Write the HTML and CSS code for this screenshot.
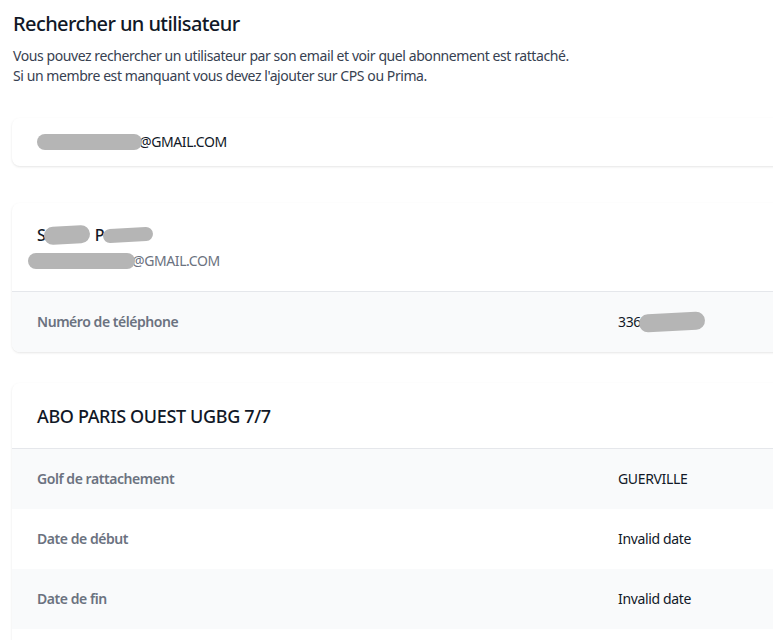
FILE: index.html
```html
<!DOCTYPE html>
<html lang="fr">
<head>
<meta charset="utf-8">
<title>Rechercher un utilisateur</title>
<link rel="stylesheet" href="styles.css">
</head>
<body>
<main class="page">
  <h1 class="title">Rechercher un utilisateur</h1>
  <p class="intro">Vous pouvez rechercher un utilisateur par son email et voir quel abonnement est rattaché.<br>Si un membre est manquant vous devez l'ajouter sur CPS ou Prima.</p>

  <section class="card search-card">
    <div class="search-value"><span class="blur blur-email1"></span>@GMAIL.COM</div>
  </section>

  <section class="card user-card">
    <div class="card-head">
      <div class="user-name">S<span class="blur blur-n1"></span>P<span class="blur blur-n2"></span></div>
      <div class="user-email"><span class="blur blur-email2"></span>@GMAIL.COM</div>
    </div>
    <dl class="list">
      <div class="row alt">
        <dt class="label">Numéro de téléphone</dt>
        <dd class="value">336<span class="blur blur-phone"></span></dd>
      </div>
    </dl>
  </section>

  <section class="card sub-card">
    <div class="card-head sub-head">
      <h2 class="sub-title">ABO PARIS OUEST UGBG 7/7</h2>
    </div>
    <dl class="list">
      <div class="row alt">
        <dt class="label">Golf de rattachement</dt>
        <dd class="value">GUERVILLE</dd>
      </div>
      <div class="row">
        <dt class="label">Date de début</dt>
        <dd class="value">Invalid date</dd>
      </div>
      <div class="row alt">
        <dt class="label">Date de fin</dt>
        <dd class="value">Invalid date</dd>
      </div>
      <div class="row">
        <dt class="label"></dt>
        <dd class="value"></dd>
      </div>
    </dl>
  </section>
</main>
</body>
</html>
```

FILE: styles.css
```css
html, body {
  margin: 0;
  padding: 0;
  background: #ffffff;
  overflow: hidden;
}

body {
  font-family: "Segoe UI", "Noto Sans", "Open Sans", sans-serif;
  color: #111827;
}

.page {
  padding: 10px 0 0 12px;
  width: 1400px;
}

.title {
  margin: 0 0 0 1px;
  font-size: 20px;
  line-height: 28px;
  font-weight: 500;
  letter-spacing: -0.6px;
  color: #111827;
}

.intro {
  margin: 8px 0 0 1px;
  font-size: 14px;
  line-height: 20px;
  letter-spacing: -0.42px;
  color: #374151;
}

.card {
  background: #ffffff;
  border-radius: 8px;
  box-shadow: 0 1px 3px rgba(0, 0, 0, 0.07), 0 1px 2px rgba(0, 0, 0, 0.04);
  overflow: hidden;
}

.search-card {
  margin-top: 32px;
  padding: 14px 25px;
}

.search-value {
  font-size: 14px;
  line-height: 20px;
  letter-spacing: -0.4px;
  color: #111827;
  display: flex;
  align-items: center;
}

.user-card {
  margin-top: 37px;
}

.sub-card {
  margin-top: 31px;
}

.card-head {
  padding: 20px 25px;
  border-bottom: 1px solid #e5e7eb;
}

.user-name {
  font-size: 16px;
  line-height: 24px;
  font-weight: 500;
  color: #111827;
  display: flex;
  align-items: center;
}

.user-email {
  margin-top: 4px;
  font-size: 14px;
  line-height: 20px;
  letter-spacing: -0.4px;
  color: #6b7280;
  display: flex;
  align-items: center;
}

.sub-head {
  padding: 21px 25px 20px 25px;
}

.sub-title {
  margin: 0;
  font-size: 18px;
  line-height: 24px;
  font-weight: 500;
  letter-spacing: -0.35px;
  color: #111827;
}

.list {
  margin: 0;
}

.row {
  display: grid;
  grid-template-columns: 565px 1fr;
  column-gap: 16px;
  padding: 20px 25px;
  min-height: 20px;
  background: #ffffff;
}

.row.alt {
  background: #f9fafb;
}

.label {
  margin: 0;
  font-size: 14px;
  line-height: 20px;
  font-weight: 600;
  letter-spacing: -0.45px;
  color: #6b7280;
}

.value {
  margin: 0;
  font-size: 14px;
  line-height: 20px;
  letter-spacing: -0.35px;
  color: #111827;
  display: flex;
  align-items: center;
}

.blur {
  display: inline-block;
  background: #b5b5b5;
  border-radius: 9px;
}

.blur-email1 {
  width: 105px;
  height: 16px;
  margin-right: -3px;
  position: relative;
  z-index: 1;
}

.blur-n1 {
  width: 46px;
  height: 18px;
  margin: 0 5px 0 -2px;
  transform: rotate(-3deg);
}

.blur-n2 {
  width: 50px;
  height: 14px;
  margin-left: -2px;
  transform: rotate(-3deg);
}

.blur-email2 {
  width: 107px;
  height: 16px;
  margin-left: -9px;
  margin-right: -3px;
  position: relative;
  z-index: 1;
}

.blur-phone {
  width: 66px;
  height: 18px;
  margin-left: -2px;
  transform: rotate(-3deg);
}
```
